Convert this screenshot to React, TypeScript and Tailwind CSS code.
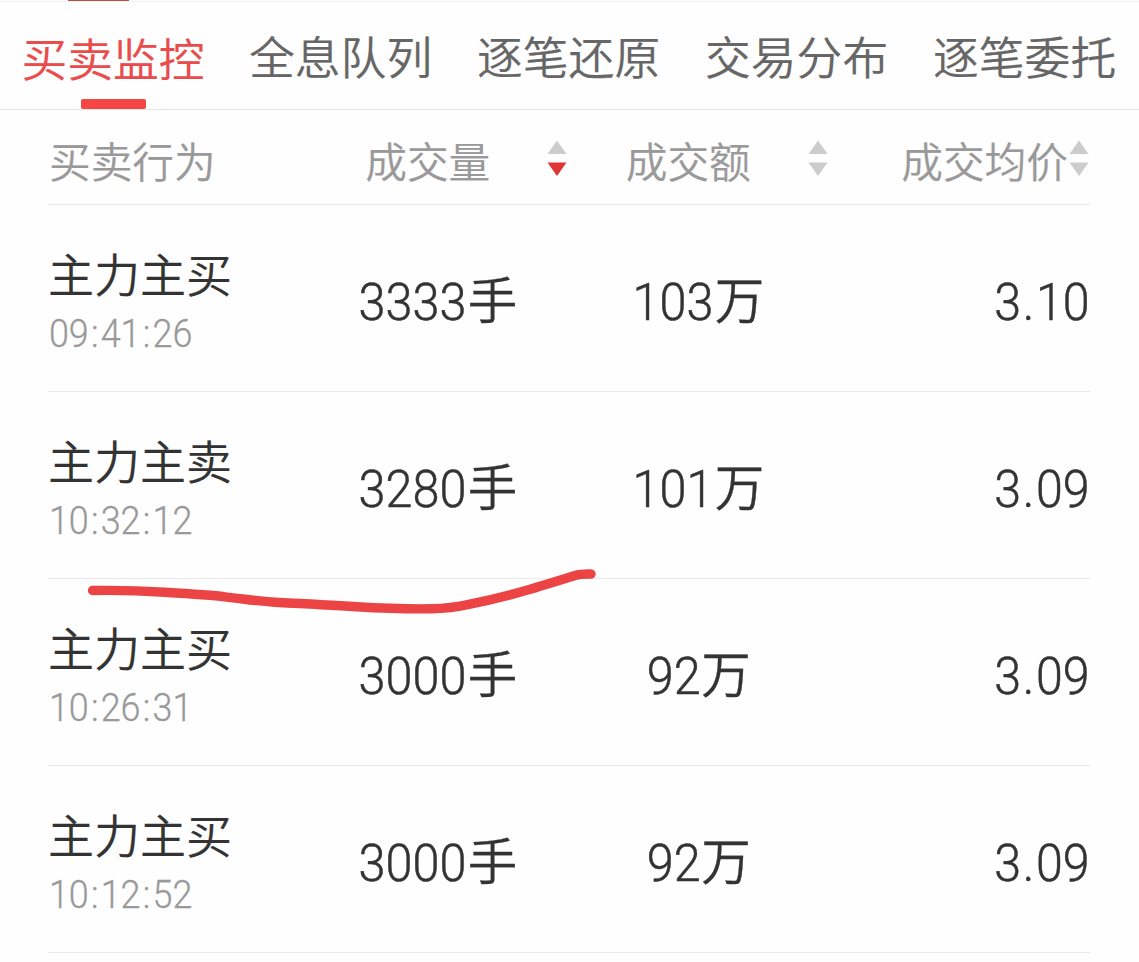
import React from "react";

const TABS = ["买卖监控", "全息队列", "逐笔还原", "交易分布", "逐笔委托"];

interface Trade {
  side: string;
  time: string;
  volume: string;
  amount: string;
  price: string;
}

const TRADES: Trade[] = [
  { side: "主力主买", time: "09:41:26", volume: "3333", amount: "103", price: "3.10" },
  { side: "主力主卖", time: "10:32:12", volume: "3280", amount: "101", price: "3.09" },
  { side: "主力主买", time: "10:26:31", volume: "3000", amount: "92", price: "3.09" },
  { side: "主力主买", time: "10:12:52", volume: "3000", amount: "92", price: "3.09" },
];

function SortIcon({ active = false }: { active?: boolean }) {
  return (
    <svg className="-mt-1 h-[37px] w-5 shrink-0" viewBox="0 0 20 37">
      <path d="M10 0.5 L19.5 14 H0.5 Z" fill="#cccccc" />
      <path d="M0.5 22.5 H19.5 L10 36 Z" fill={active ? "#e03535" : "#cccccc"} />
    </svg>
  );
}

function Quantity({ value, unit }: { value: string; unit: string }) {
  // The condensed digits give back about 2px of advance each.
  return (
    <div className="pt-1.5 text-center">
      <span
        className="mr-px inline-block origin-right scale-x-[0.935]"
        style={{ marginLeft: value.length * -2 - 1 }}
      >
        {value}
      </span>
      <span className="relative -top-px font-['Noto_Sans_CJK_SC',sans-serif] text-[49.5px] [-webkit-text-stroke:0.3px]">{unit}</span>
    </div>
  );
}

function Price({ value }: { value: string }) {
  const [whole, fraction] = value.split(".");
  return (
    <span className="inline-block origin-right scale-x-[0.93]">
      {whole}
      <span className="inline-block w-4 text-center">.</span>
      {fraction}
    </span>
  );
}

function Time({ value }: { value: string }) {
  return (
    <div className="origin-left scale-x-[0.905] pl-px text-[39.7px] leading-[46px] text-[#999999] [-webkit-text-stroke:0.3px]">
      {value.split(":").map((part, i) => (
        <React.Fragment key={i}>
          {i > 0 && <span className="inline-block w-[13.2px] text-center">:</span>}
          {part}
        </React.Fragment>
      ))}
    </div>
  );
}

function Row({ trade }: { trade: Trade }) {
  return (
    <div className="grid h-[187px] grid-cols-4 items-center border-b border-[#e9e9e9] font-['Roboto','Noto_Sans_CJK_SC',sans-serif] text-[52px] leading-[60px] font-[350] text-[#333333] [-webkit-text-stroke:0.5px]">
      <div className="pt-px">
        <div className="pb-2 font-['Noto_Sans_CJK_SC',sans-serif] text-[46px] leading-[62px] [-webkit-text-stroke:0.2px]">
          {trade.side}
        </div>
        <Time value={trade.time} />
      </div>
      <Quantity value={trade.volume} unit="手" />
      <Quantity value={trade.amount} unit="万" />
      <div className="pt-2.5 text-right">
        <Price value={trade.price} />
      </div>
    </div>
  );
}

export default function App() {
  return (
    <div className="relative h-[962px] w-[1139px] overflow-hidden bg-[#fefefe] font-['Noto_Sans_CJK_SC',sans-serif] font-[350] [-webkit-text-stroke:0.2px]">
      <div className="h-px pl-[68px]">
        <div className="h-px w-[61px] bg-[#b8503f]" />
      </div>
      <nav className="flex h-[109px] gap-11 border-y border-t-[#f1f1f1] border-b-[#e4e4e4] pl-[21px] text-[45.8px] leading-[60px] text-[#666666]">
        {TABS.map((tab, i) =>
          i === 0 ? (
            <div key={tab} className="flex w-[184px] shrink-0 flex-col items-center justify-between pt-[25px] text-[#ea4b4b]">
              <span>{tab}</span>
              <span className="h-2.5 w-[65px] rounded-[2px] bg-[#f54545]" />
            </div>
          ) : (
            <div key={tab} className="w-[184px] shrink-0 pt-[23px]">
              {tab}
            </div>
          ),
        )}
      </nav>
      <main className="w-[1090px] pl-12">
        <div className="grid h-[95px] grid-cols-4 items-center border-b border-[#e9e9e9] pt-[6px] text-[41.7px] leading-[60px] text-[#999999]">
          <div className="pl-px">买卖行为</div>
          <div className="flex items-center pr-0.5">
            <span className="flex-1 text-center">成交量</span>
            <SortIcon active />
          </div>
          <div className="flex items-center pr-0.5">
            <span className="flex-1 text-center">成交额</span>
            <SortIcon />
          </div>
          <div className="flex items-center justify-end pr-px">
            <span className="-mr-px pr-0.5">成交均价</span>
            <SortIcon />
          </div>
        </div>
        {TRADES.map((trade) => (
          <Row key={trade.time} trade={trade} />
        ))}
      </main>
      <svg className="pointer-events-none absolute top-[560px] left-[80px] h-[60px] w-[530px]" viewBox="80 560 530 60" fill="none">
        <path
          d="M92.5 590.5 C125 590 145 591 165 592.3 C190 593.8 210 595 225 596.8 C245 599 255 601 275 602.2 C305 603.7 330 605 357 606.8 C385 608.5 415 609 432 608.8 C448 608.6 455 607.5 470 604.2 C510 596 535 588 575 575.5 C580 574 584 573.8 591 574"
          stroke="#ec4444"
          strokeWidth="9.4"
          strokeLinecap="round"
          strokeLinejoin="round"
        />
      </svg>
    </div>
  );
}
